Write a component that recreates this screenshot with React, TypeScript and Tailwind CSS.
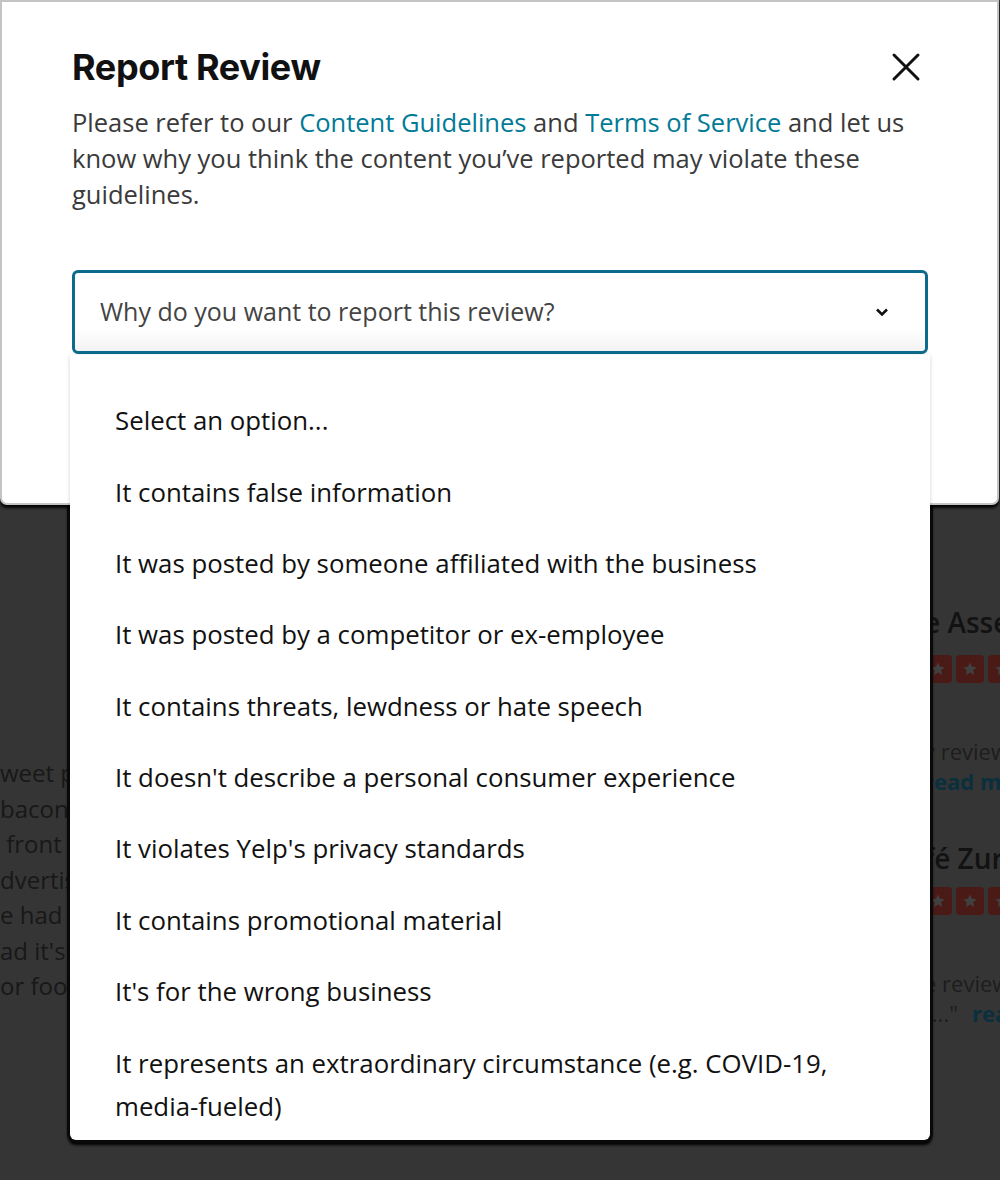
const options = [
  'Select an option...',
  'It contains false information',
  'It was posted by someone affiliated with the business',
  'It was posted by a competitor or ex-employee',
  'It contains threats, lewdness or hate speech',
  "It doesn't describe a personal consumer experience",
  "It violates Yelp's privacy standards",
  'It contains promotional material',
  "It's for the wrong business",
  'It represents an extraordinary circumstance (e.g. COVID-19, media-fueled)',
]

const reviewLines = ['weet potatoes', 'bacon? Yes', ' front of the', 'dvertised', 'e had to', "ad it's a", 'or food']

function Stars() {
  return (
    <div className="flex gap-[4px]">
      {[0, 1, 2].map((i) => (
        <div key={i} className="flex h-[28px] w-[28px] items-center justify-center rounded-[4px] bg-[#4a1a17]">
          <svg width="16" height="16" viewBox="0 0 24 24">
            <path d="M12 2l3 6.6 7 .7-5.3 4.7 1.6 7L12 17.3 5.7 21l1.6-7L2 9.3l7-.7z" fill="#404040" />
          </svg>
        </div>
      ))}
    </div>
  )
}

export default function App() {
  return (
    <div className="relative h-[1180px] w-[1000px] overflow-hidden bg-[#353535] font-['Open_Sans',sans-serif]">
      {/* background page, dimmed by the overlay */}
      <div className="flex h-full">
        <div className="w-[300px] shrink-0 pt-[755px] text-[24px] leading-[35.5px] text-[#181818]">
          {reviewLines.map((l) => (
            <div key={l} className="whitespace-pre">{l}</div>
          ))}
        </div>
        <div className="ml-[624px] w-[200px] shrink-0 pt-[603px] text-[#121212]">
          <div className="whitespace-nowrap text-[28px] font-semibold leading-[38px]">e Assembly</div>
          <div className="mt-[14px]">
            <Stars />
          </div>
          <div className="mt-[53px] whitespace-nowrap text-[22px] leading-[30px] text-[#1d1d1d]">y reviews</div>
          <div className="whitespace-nowrap text-[22px] font-bold leading-[30px] text-[#0a2f3d]">read more</div>
          <div className="mt-[43px] whitespace-nowrap text-[28px] font-semibold leading-[38px]">fé Zurich</div>
          <div className="mt-[10px]">
            <Stars />
          </div>
          <div className="mt-[53px] whitespace-nowrap text-[22px] leading-[30px] text-[#1d1d1d]">e reviews</div>
          <div className="whitespace-nowrap text-[22px] leading-[30px] text-[#1d1d1d]">
            t..."<span className="ml-[14px] font-bold text-[#0a2f3d]">read</span>
          </div>
        </div>
      </div>

      {/* dark edge of the native list, hidden where the modal covers it */}
      <div className="absolute left-[70px] top-[355px] h-[785px] w-[860px] rounded-b-[6px] shadow-[0_0_0_3px_#0a0a0a,0_3px_3px_2px_#000]" />

      {/* modal */}
      <div className="absolute left-0 top-0 h-[505px] w-[999px] rounded-b-[7px] border-2 border-[#c4c4c4] bg-white pl-[70px] pr-[70px] pt-[42px] shadow-[0_3px_3px_rgba(0,0,0,0.95)]">
        <div className="flex items-center justify-between">
          <h1 className="font-['Inter',sans-serif] text-[36px] font-bold leading-[46px] tracking-[-0.01em] text-[#111]">
            Report Review
          </h1>
          <svg width="30" height="30" viewBox="0 0 30 30" className="mr-[6px]">
            <path d="M3 3L27 27M27 3L3 27" stroke="#111" strokeWidth="3" strokeLinecap="round" />
          </svg>
        </div>
        <p className="mt-[14px] w-[840px] text-[25.5px] leading-[36px] text-[#3a3a3a]">
          Please refer to our <span className="text-[#027a97]">Content Guidelines</span> and{' '}
          <span className="text-[#027a97]">Terms of Service</span> and let us know why you think the content you’ve
          reported may violate these guidelines.
        </p>
        <div className="mt-[58px] flex h-[84px] w-[856px] items-center justify-between rounded-[6px] border-[3px] border-[#0d6a8c] bg-gradient-to-b from-white from-70% to-[#f3f3f3] pl-[25px] pr-[36px]">
          <span className="text-[25px] text-[#444]">Why do you want to report this review?</span>
          <svg width="14" height="10" viewBox="0 0 14 10">
            <path d="M2 2.5L7 7.5L12 2.5" stroke="#111" strokeWidth="2.6" fill="none" />
          </svg>
        </div>
      </div>

      {/* open dropdown list */}
      <div className="absolute left-[70px] top-[355px] h-[785px] w-[860px] rounded-b-[6px] bg-white pt-[30px] shadow-[0_1px_4px_rgba(0,0,0,0.18)]">
        {options.map((o) => (
          <div key={o} className="py-[14.2px] pl-[45px] pr-[80px] text-[25.8px] leading-[43px] text-[#111]">
            {o}
          </div>
        ))}
      </div>
    </div>
  )
}
